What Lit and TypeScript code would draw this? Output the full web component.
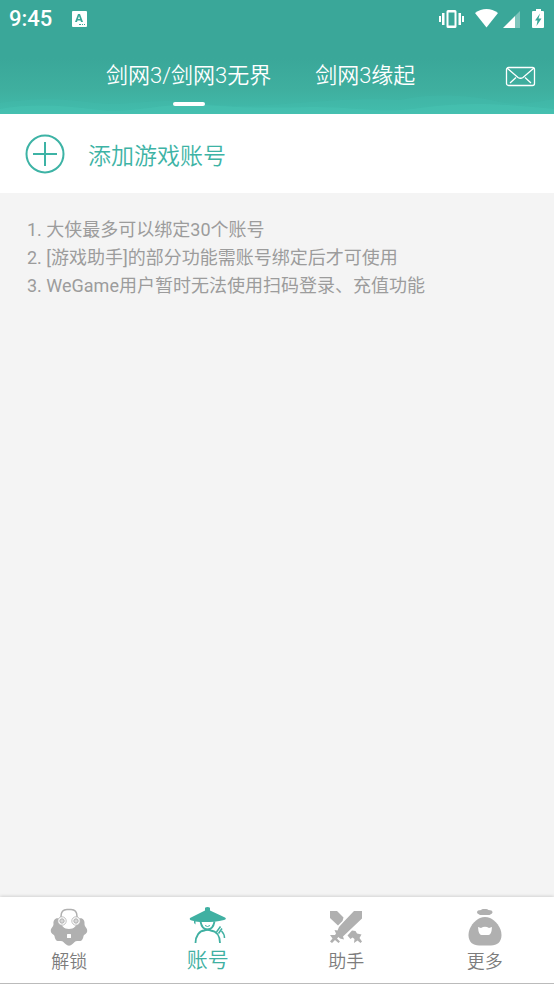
import { LitElement, html, css, svg } from "lit";
import { customElement, state } from "lit/decorators.js";

const lockIcon = svg`
  <path fill="currentColor" d="M8.500 11.500C5.500 10.500 3 13.500 3.500 17C3.500 20 .5 21 .8 24C1 27 3.500 27 4.500 29C5 32 6 34.500 9.500 34C13 33.500 13.500 35 15.500 37Q19 40.500 22.500 37C24.500 35 25 33.500 28.500 34C32 34.500 33 32 33.500 29C34.500 27 37 27 37.200 24C37.500 21 34.500 20 34.500 17C35 13.500 32.500 10.500 29.500 11.500C27 19 24 22 19 22S11 19 8.500 11.500Z"/>
  <path fill="none" stroke="currentColor" stroke-width="1.500" d="M11 11V9.500C11 5 13.500 2.500 17 2.500H21C24.500 2.500 27 5 27 9.500V11"/>
  <g stroke="currentColor" stroke-width=".8" fill="#fff"><circle cx="12" cy="14" r="4.200"/><circle cx="26" cy="14" r="4.200"/></g>
  <g stroke="currentColor" fill="currentColor" fill-opacity=".5"><circle cx="12" cy="14" r="2.200"/><circle cx="26" cy="14" r="2.200"/></g>
  <rect x="17" y="27" width="4" height="4" rx=".5" fill="#fff"/>`;

const heroIcon = svg`
  <path fill="currentColor" d="M16 .8Q18.500 -1 21 .8V3.500L36 10.500C37.500 11.500 37 12.500 35 13C25 15.500 13 15.500 6.500 14.500V17.500L5 16V14C1.500 13.500 0 12.500 1 11L16 3.500Z"/>
  <g fill="none" stroke="currentColor" stroke-width="1.800">
    <path d="M11.500 14.500C12.500 20 15.500 22.500 18.500 22.500S24.500 20 25.500 14.500"/>
    <path d="M6.500 36C6.500 29 10.500 23.500 15.500 23.500Q18.500 22 21.500 23.500C27.500 24 31 29 31 36"/>
    <path stroke-width="1" d="M16 18.500Q18.500 20.500 21 18.500"/>
    <path stroke-width="1.500" d="M27.500 25L31.500 19.500M29.500 26.500L33 21.500M32.500 24C34.500 26 35.500 28 35.500 31"/>
  </g>`;

const swordsIcon = svg`
  <path fill="currentColor" d="M3 4H10L16.500 10.500L15.500 14L11 18.500L3 11Z"/>
  <path fill="currentColor" d="M27 4H35V11.500L16 29.500L17 32.500L13 31.500L11.500 30L10 31.500L13 34.500L11.500 36L8 33L5 36L3 34.500L5.500 31.500L3 28L8 28L9 26.500L7.500 23L10.500 23.500L12 20L16.500 15Z"/>
  <path fill="currentColor" d="M20.500 28.500L25 23.500L28.500 24L30 26.500L34.500 27.500L32.500 31L35 34.500L33.500 36L30.500 33.500L27 36L27.500 32L25.500 30.500L23.500 32Z"/>`;

const bagIcon = svg`
  <path fill="currentColor" d="M12 3.500L15 3Q16 2 17 2H20Q21.500 2 22.500 3L25.500 3.500Q27.500 5 26 6.500L23.500 8H14L11.500 6.500Q10 5 12 3.500Z"/>
  <path fill="currentColor" d="M14 11Q19 9 24 11C29 13 35.500 20 35.500 28C35.500 35 31 38.500 25 38.500H13C7 38.500 2.500 35 2.500 28C2.500 20 9 13 14 11Z"/>
  <path fill="#fff" d="M12 20L15 21Q19 18.500 23 21L26 20Q25.500 28 22.500 28H15.500Q12.500 28 12 20Z"/>`;

const navItems = [
  { label: "解锁", icon: lockIcon },
  { label: "账号", icon: heroIcon },
  { label: "助手", icon: swordsIcon },
  { label: "更多", icon: bagIcon },
];

@customElement("app-root")
export class AppRoot extends LitElement {
  @state() private tab = 0;
  @state() private page = 1;

  static styles = css`
    :host {
      display: flex;
      flex-direction: column;
      min-height: 100vh;
      background: #f4f4f4;
      color: #999;
      font-family: Roboto, "Noto Sans CJK SC", sans-serif;
      font-weight: 350;
    }
    button {
      border: 0;
      padding: 0;
      background: none;
      color: inherit;
      font: inherit;
      cursor: pointer;
    }
    svg { display: block; flex: none; }
    .header {
      position: relative;
      height: 114px;
      background: linear-gradient(#3aa799 0, #3aa799 58px, #3faf9f 90px, #41bbab 114px);
      color: #fff;
    }
    .waves { position: absolute; left: 0; bottom: 0; width: 100%; height: 20px; }
    .status {
      display: flex;
      align-items: center;
      height: 38px;
      padding: 0 9px;
    }
    .time { font-size: 22px; font-weight: 500; line-height: 38px; margin-right: 19px; }
    .signals { display: flex; align-items: center; margin-left: auto; }
    .bar {
      position: relative;
      display: grid;
      grid-template-columns: 106px auto auto 1fr;
      height: 76px;
    }
    .tab {
      position: relative;
      font-size: 22px;
      line-height: 32px;
      padding: 22px 0;
      white-space: nowrap;
    }
    .first { grid-column: 2; margin-right: 44px; }
    .tab.on::after {
      content: "";
      position: absolute;
      left: 50%;
      bottom: 8px;
      width: 32px;
      height: 4px;
      margin-left: -16px;
      border-radius: 2px;
      background: #fff;
    }
    .mail { justify-self: end; margin-right: 18px; }
    .add {
      display: flex;
      align-items: center;
      gap: 23px;
      height: 79px;
      padding: 0 25px;
      background: #fff;
      color: #3db3a5;
      font-size: 23px;
      text-align: left;
    }
    .notes {
      flex: 1;
      margin: 0;
      padding: 23px 27px;
      list-style: none;
      color: #9c9c9c;
      font-size: 18px;
      font-weight: 400;
      line-height: 28px;
    }
    .nav {
      display: grid;
      grid-template-columns: repeat(4, 1fr);
      height: 86px;
      background: #fff;
      border-bottom: 1px solid #bbb;
      box-shadow: 0 -1px 3px #0002;
    }
    .item {
      display: flex;
      flex-direction: column;
      align-items: center;
      padding-top: 10px;
      color: #b0b0b0;
    }
    .label { color: #7c7c7c; font-size: 18px; line-height: 32px; }
    .item.on { color: #40b0a2; }
    .item.on .label { color: inherit; font-size: 21px; line-height: 28px; }
  `;

  private renderStatus() {
    return html`
      <div class="status">
        <span class="time">9:45</span>
        <svg width="16" height="16" viewBox="0 0 16 16" aria-hidden="true">
          <rect x="1" y="0" width="15" height="16" rx="1" fill="#fff"/>
          <path fill="#3aa799" fill-rule="evenodd" d="M4 11L7 3H9L12 11H10L9.500 9.500H6.500L6 11ZM7 8H9L8 5ZM8 13H10V14H8ZM11 13H12V14H11ZM13 13H14V14H13Z"/>
        </svg>
        <div class="signals">
          <svg width="107" height="22" viewBox="0 0 107 22" fill="#fff" aria-hidden="true">
            <path fill-rule="evenodd" d="M10 2H17Q18.500 2 18.500 3.500V18.500Q18.500 20 17 20H10Q8.500 20 8.500 18.500V3.500Q8.500 2 10 2ZM10.500 4.500V17.500H16.500V4.500Z"/>
            <path d="M4 5H6.500V17H4ZM1 8H3V14H1ZM20.500 5H23V17H20.500ZM24 8H26V14H24Z"/>
            <path d="M37 5C44-.5 53-.5 60 5L48.500 19.500Z"/>
            <path d="M65 20L77 8V20Z"/><path opacity=".35" d="M77 8L82 3V20H77Z"/>
            <path fill-rule="evenodd" d="M98 1H103V3H105Q106 3 106 4V19Q106 20 105 20H95Q94 20 94 19V4Q94 3 95 3H98ZM102 5.500L97 12.500H99.500L98.500 18L103.500 10.500H100.500Z"/>
          </svg>
        </div>
      </div>`;
  }

  render() {
    return html`
      <header class="header">
        <svg class="waves" viewBox="0 0 554 20" preserveAspectRatio="none" aria-hidden="true">
          <path fill="#47c5b5" opacity=".2" d="M0 9C40 3 65 5 95 9S150 4 185 8S245 13 285 10S360 4 400 6C430-1 470 1 495 7S535 8 554 5V20H0Z"/>
          <path fill="#4bcabb" opacity=".3" d="M0 15C35 9 65 12 100 16S160 8 205 11S270 14 310 13S380 20 420 14S500 9 554 15V20H0Z"/>
        </svg>
        ${this.renderStatus()}
        <nav class="bar">
          ${["剑网3/剑网3无界", "剑网3缘起"].map(
            (name, i) => html`<button
              class="tab ${i === 0 ? "first" : ""} ${this.tab === i ? "on" : ""}"
              @click=${() => (this.tab = i)}>${name}</button>`
          )}
          <button class="mail" aria-label="邮件">
            <svg width="31" height="21" viewBox="0 0 31 21" fill="none" stroke="#fff" stroke-width="1.300">
              <rect x="1.500" y="1.500" width="28" height="18" rx="2"/>
              <path d="M2 2L13 11.500Q15.500 13 18 11.500L29 2M5 17L11 11.500M20 11.500L26 17"/>
            </svg>
          </button>
        </nav>
      </header>
      <button class="add">
        <svg width="40" height="40" viewBox="0 0 40 40" fill="none" stroke="currentColor" aria-hidden="true">
          <circle cx="20" cy="20" r="18.500" stroke-width="2"/>
          <path d="M20 8V32M8 20H32" stroke-width="2"/>
        </svg>
        <span>添加游戏账号</span>
      </button>
      <ol class="notes">
        <li>1. 大侠最多可以绑定30个账号</li>
        <li>2. [游戏助手]的部分功能需账号绑定后才可使用</li>
        <li>3. WeGame用户暂时无法使用扫码登录、充值功能</li>
      </ol>
      <nav class="nav">
        ${navItems.map(
          (item, i) => html`<button class="item ${this.page === i ? "on" : ""}" @click=${() => (this.page = i)}>
            <svg width="38" height="39" viewBox="0 0 38 39" overflow="visible" aria-hidden="true">${item.icon}</svg>
            <span class="label">${item.label}</span>
          </button>`
        )}
      </nav>
    `;
  }
}
